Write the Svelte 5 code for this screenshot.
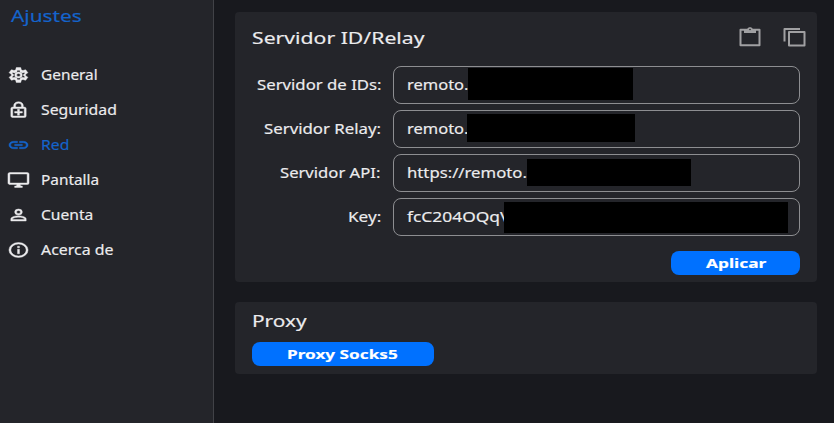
<script>
  const nav = [
    { label: 'General', w: 57, icon: 'M19.43 12.98c.04-.32.07-.64.07-.98s-.03-.66-.07-.98l2.11-1.65c.19-.15.24-.42.12-.64l-2-3.46a.5.5 0 0 0-.61-.22l-2.49 1c-.52-.4-1.08-.73-1.69-.98l-.38-2.65A.49.49 0 0 0 14 2h-4c-.25 0-.46.18-.49.42l-.38 2.65c-.61.25-1.17.59-1.69.98l-2.49-1a.5.5 0 0 0-.61.22l-2 3.46c-.13.22-.07.49.12.64l2.11 1.65c-.04.32-.07.65-.07.98s.03.66.07.98l-2.11 1.65c-.19.15-.24.42-.12.64l2 3.46c.12.22.39.3.61.22l2.49-1c.52.4 1.08.73 1.69.98l.38 2.65c.03.24.24.42.49.42h4c.25 0 .46-.18.49-.42l.38-2.65c.61-.25 1.17-.59 1.69-.98l2.49 1c.23.09.49 0 .61-.22l2-3.46c.12-.22.07-.49-.12-.64zM17.2 11.3l.1.7-.1.9 1.6 1.5-.8 1.3-2-.8-1.2.9-1 .5-.3 2.1h-2.8l-.3-2.1-1-.5-1.3-.9-2 .8-.8-1.3 1.6-1.5-.1-.9.1-.7-1.6-1.5.8-1.3 2 .8 1.2-.9 1-.5.3-2.1h2.8l.3 2.1 1 .5 1.3.9 2-.8.8 1.3zM12 8a4 4 0 1 0 0 8 4 4 0 0 0 0-8zm0 6a2 2 0 1 1 0-4 2 2 0 0 1 0 4z' },
    { label: 'Seguridad', w: 76, icon: 'M18 8h-1V6A5 5 0 0 0 7 6v2H6a2 2 0 0 0-2 2v10c0 1.1.9 2 2 2h12a2 2 0 0 0 2-2V10a2 2 0 0 0-2-2zM9 6a3 3 0 0 1 6 0v2H9zm9 14H6V10h12zm-7-1h2v-3h3v-2h-3v-3h-2v3H8v2h3z' },
    { label: 'Red', w: 28, active: true, icon: 'M3.9 12A3.1 3.1 0 0 1 7 8.9h4V7H7a5 5 0 0 0 0 10h4v-1.9H7A3.1 3.1 0 0 1 3.9 12zM8 13h8v-2H8zm9-6h-4v1.9h4a3.1 3.1 0 0 1 0 6.2h-4V17h4a5 5 0 0 0 0-10z' },
    { label: 'Pantalla', w: 58, icon: 'M21 2H3a2 2 0 0 0-2 2v12c0 1.1.9 2 2 2h7v2H8v2h8v-2h-2v-2h7a2 2 0 0 0 2-2V4a2 2 0 0 0-2-2zm0 14H3V4h18z' },
    { label: 'Cuenta', w: 52, icon: 'M12 5.9a2.1 2.1 0 1 1 0 4.2 2.1 2.1 0 0 1 0-4.2m0 9c2.97 0 6.1 1.46 6.1 2.1v1.1H5.9V17c0-.64 3.13-2.1 6.1-2.1M12 4a4 4 0 1 0 0 8 4 4 0 0 0 0-8zm0 9c-2.67 0-8 1.34-8 4v3h16v-3c0-2.66-5.33-4-8-4z' },
    { label: 'Acerca de', w: 73, icon: 'M11 7h2v2h-2zm0 4h2v6h-2zm1-9a10 10 0 1 0 0 20 10 10 0 0 0 0-20zm0 18a8 8 0 1 1 0-16 8 8 0 0 1 0 16z' }
  ];

  // mask: start, top, width and height of the redaction inside the field
  const fields = [
    { label: 'Servidor de IDs:', lw: 124, value: 'remoto.', vw: 61, mask: [74, 1, 165, 32] },
    { label: 'Servidor Relay:', lw: 117, value: 'remoto.', vw: 61, mask: [73, 3, 168, 28] },
    { label: 'Servidor API:', lw: 101, value: 'https://remoto.', vw: 120, mask: [133, 4, 164, 27] },
    { label: 'Key:', lw: 33, value: 'fcC204OQqV', vw: 103, mask: [110, 3, 284, 31] }
  ];

  // Widens a run of text to the given width
  function fit(node, width) {
    node.style.transform = `scaleX(${width / node.offsetWidth})`;
  }
</script>

{#snippet wide(text, w)}
  <span class="box" style:width="{w}px"><span class="run" use:fit={w}>{text}</span></span>
{/snippet}

<div class="app">
  <aside>
    <h1>{@render wide('Ajustes', 71)}</h1>
    <nav>
      {#each nav as item}
        <div class="item" class:active={item.active}>
          <svg viewBox="0 0 24 24" preserveAspectRatio="none"><path fill-rule="evenodd" d={item.icon} /></svg>
          {@render wide(item.label, item.w)}
        </div>
      {/each}
    </nav>
  </aside>
  <main>
    <section class="server">
      <header>
        <h2>{@render wide('Servidor ID/Relay', 172)}</h2>
        <div class="tools">
          <svg width="22" height="20" viewBox="0 0 22 20"><path fill="none" stroke="#a0a0a2" stroke-width="2" stroke-linejoin="round" d="M1.5 2.8h19v15.4h-19z" /><path fill="#a0a0a2" d="M5 2h3.3c.4-1.2 1.3-1.8 2.7-1.8s2.3.6 2.7 1.8H17v4H5z" /><circle cx="11" cy="2.5" r=".8" fill="#24252a" /></svg>
          <svg width="23" height="20" viewBox="0 0 23 20"><path fill="none" stroke="#a0a0a2" stroke-width="2" d="M1.5 14.5V2H17M6 5h15.5v13.4H6z" stroke-linejoin="round" /></svg>
        </div>
      </header>
      <div class="fields">
        {#each fields as f}
          <div class="row">
            <div class="label">{@render wide(f.label, f.lw)}</div>
            <div class="input">
              {@render wide(f.value, f.vw)}
              <i style:left="{f.mask[0]}px" style:top="{f.mask[1]}px" style:width="{f.mask[2]}px" style:height="{f.mask[3]}px"></i>
            </div>
          </div>
        {/each}
      </div>
      <button class="apply">{@render wide('Aplicar', 60)}</button>
    </section>
    <section class="proxy">
      <h2>{@render wide('Proxy', 55)}</h2>
      <button>{@render wide('Proxy Socks5', 111)}</button>
    </section>
  </main>
</div>

<style>
  .app {
    display: flex;
    width: 834px;
    height: 423px;
    overflow: hidden;
    box-sizing: border-box;
    background: #18191e;
    color: #ececee;
    font: 13.5px/20px 'Noto Sans', 'Open Sans', sans-serif;
  }
  .box { display: block; flex: none; }
  .run { display: inline-block; white-space: nowrap; transform-origin: 0 50%; -webkit-text-stroke: 0.15px currentColor; }
  h1, h2 { margin: 0; font-size: 17px; font-weight: 400; line-height: 24px; }
  aside {
    box-sizing: border-box;
    width: 214px;
    flex: none;
    padding: 4px 0 0 11px;
    background: #24252a;
    border-right: 1px solid #414247;
  }
  h1 { color: #1464cc; }
  nav { margin-top: 29px; }
  .item { display: flex; align-items: center; height: 35px; margin-left: -4px; gap: 11px; }
  .item svg { width: 23px; height: 18px; fill: currentColor; stroke: currentColor; stroke-width: 0.5px; flex: none; }
  .active { color: #1464cc; }
  main { flex: 1; padding: 12px 17px 0 21px; }
  section { box-sizing: border-box; background: #24252a; border-radius: 4px; padding: 0 17px; }
  .server { height: 270px; }
  header { display: flex; justify-content: space-between; padding-top: 14px; height: 40px; }
  .tools { display: flex; gap: 22px; margin-right: -6px; padding-top: 1px; }
  .tools svg { display: block; }
  .fields { display: flex; flex-direction: column; gap: 6px; }
  .row { display: flex; height: 38px; gap: 12px; }
  .label { width: 129px; display: flex; justify-content: flex-end; align-items: center; }
  .input {
    position: relative;
    box-sizing: border-box;
    width: 407px;
    display: flex;
    align-items: center;
    padding: 0 0 1px 13px;
    border: 1px solid #8d8e91;
    border-radius: 8px;
  }
  .input i { position: absolute; background: #000; }
  button {
    display: flex;
    align-items: center;
    justify-content: center;
    width: 182px;
    height: 24px;
    padding: 0 2px 0 0;
    border: 0;
    border-radius: 8px;
    background: #0071ff;
    color: #fff;
    font: 700 13px/20px 'Noto Sans', 'Open Sans', sans-serif;
    text-align: left;
  }
  .apply { width: 129px; padding: 0 0 0 1px; margin: 15px 0 0 auto; }
  .proxy { height: 72px; margin-top: 20px; padding-top: 7px; }
  .proxy button { margin-top: 9px; }
</style>
